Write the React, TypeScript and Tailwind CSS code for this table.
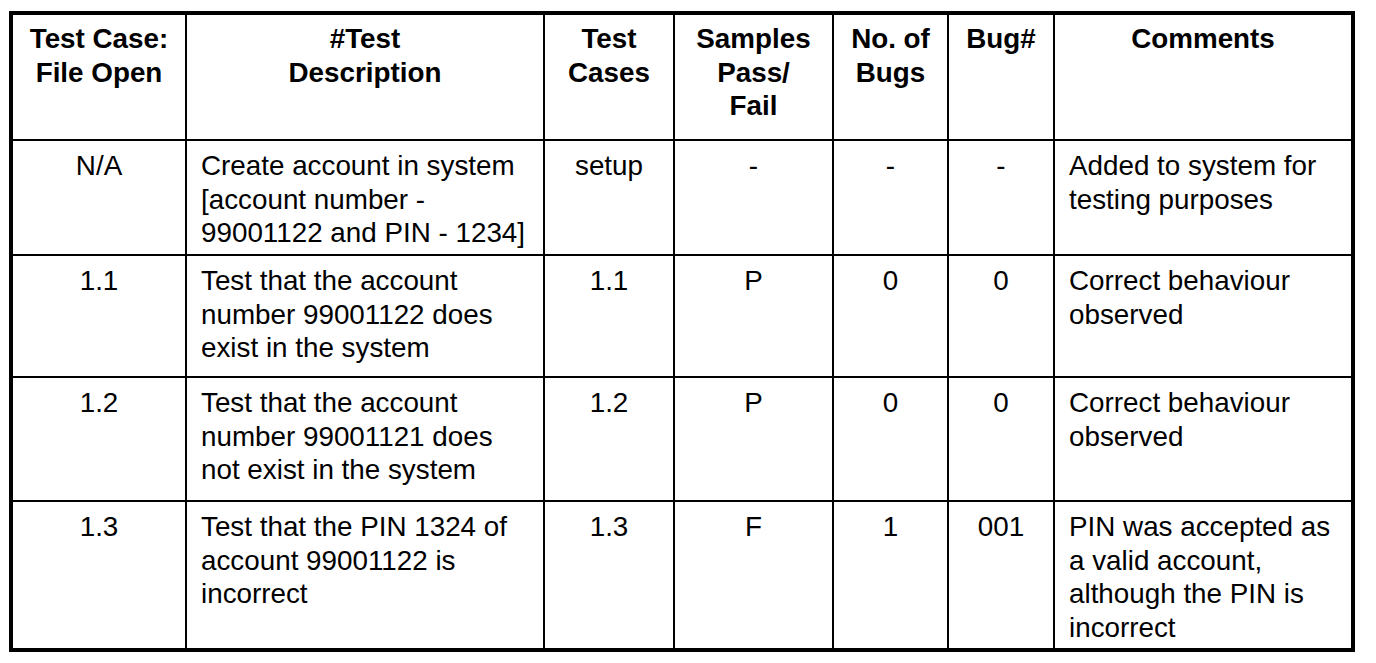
import React from 'react'

const cols = ['w-[174px]', 'w-[358px]', 'w-[130px]', 'w-[159px]', 'w-[115px]', 'w-[106px]', 'w-[296px]']
const aligns: ('center' | 'left')[] = ['center', 'left', 'center', 'center', 'center', 'center', 'left']

const header: string[][] = [
  ['Test Case:', 'File Open'],
  ['#Test', 'Description'],
  ['Test', 'Cases'],
  ['Samples', 'Pass/', 'Fail'],
  ['No. of', 'Bugs'],
  ['Bug#'],
  ['Comments'],
]

const rows: { h: string; cells: string[][] }[] = [
  {
    h: 'h-[115px]',
    cells: [
      ['N/A'],
      ['Create account in system', '[account number -', '99001122 and PIN - 1234]'],
      ['setup'],
      ['-'],
      ['-'],
      ['-'],
      ['Added to system for', 'testing purposes'],
    ],
  },
  {
    h: 'h-[122px]',
    cells: [
      ['1.1'],
      ['Test that the account', 'number 99001122 does', 'exist in the system'],
      ['1.1'],
      ['P'],
      ['0'],
      ['0'],
      ['Correct behaviour', 'observed'],
    ],
  },
  {
    h: 'h-[124px]',
    cells: [
      ['1.2'],
      ['Test that the account', 'number 99001121 does', 'not exist in the system'],
      ['1.2'],
      ['P'],
      ['0'],
      ['0'],
      ['Correct behaviour', 'observed'],
    ],
  },
  {
    h: 'h-[146px]',
    cells: [
      ['1.3'],
      ['Test that the PIN 1324 of', 'account 99001122 is', 'incorrect'],
      ['1.3'],
      ['F'],
      ['1'],
      ['001'],
      ['PIN was accepted as', 'a valid account,', 'although the PIN is', 'incorrect'],
    ],
  },
]

function Row({ cells, h, bold, last }: { cells: string[][]; h: string; bold?: boolean; last?: boolean }) {
  return (
    <div className={`flex ${h} ${last ? '' : 'border-b-2 border-black'}`}>
      {cells.map((lines, i) => (
        <div
          key={i}
          className={`${cols[i]} shrink-0 ${i < 6 ? 'border-r-2 border-black' : ''} ${
            bold ? 'font-bold text-center pt-[7px]' : aligns[i] === 'center' ? 'text-center pt-[8px]' : 'text-left pl-[14px] pt-[8px]'
          }`}
        >
          {lines.map((l, j) => (
            <div key={j} className="whitespace-nowrap">
              {l}
            </div>
          ))}
        </div>
      ))}
    </div>
  )
}

export default function App() {
  return (
    <div className="w-[1376px] h-[663px] bg-white pt-[11px] pl-[9px] text-black text-[27.8px] leading-[33.5px] font-['Liberation_Sans',Arial,sans-serif]">
      <div className="w-[1346px] border-4 border-black">
        <Row cells={header} h="h-[126px]" bold />
        {rows.map((r, i) => (
          <Row key={i} cells={r.cells} h={r.h} last={i === rows.length - 1} />
        ))}
      </div>
    </div>
  )
}
